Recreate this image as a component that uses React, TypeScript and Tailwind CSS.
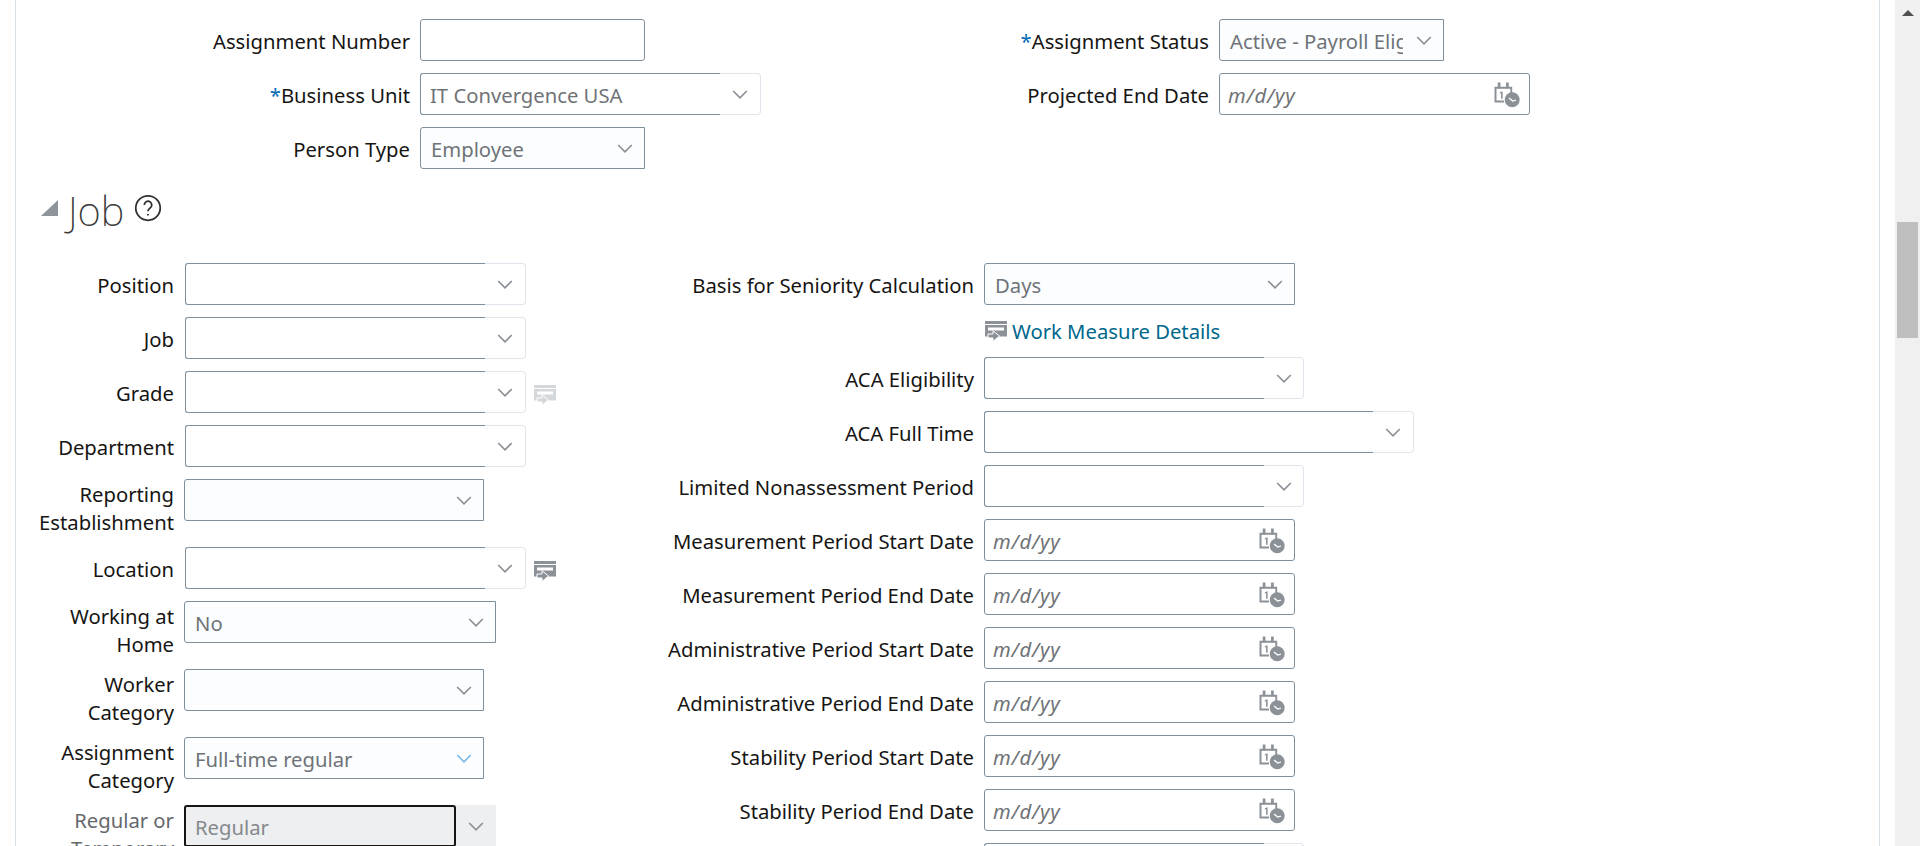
import type { ReactNode } from "react";

const labelFont = "font-['Noto_Sans','Open_Sans',sans-serif]";

function Chevron({ color = "#8b9197" }: { color?: string }) {
  return (
    <svg width="16" height="9" viewBox="0 0 16 9" fill="none" className="shrink-0">
      <path d="M1.2 1 8 7.8 14.8 1" stroke={color} strokeWidth="1.7" />
    </svg>
  );
}

function CalendarClock() {
  return (
    <svg width="26" height="26" viewBox="0 0 25 25" className="mt-[1px] shrink-0">
      <path d="M0.5 4.5h17v6h-1.8V6.4H2.4v11.4h7.2v1.9H0.5z" fill="#8b9197" />
      <path d="M3.6 0.5h2.6v5.5H3.6zM11.6 0.5h2.6v5.5h-2.6z" fill="#8b9197" />
      <path d="M7 9.2 5.6 10v1.2l1.2-.6V16h1.5V9.2z" fill="#8b9197" />
      <circle cx="17.5" cy="17" r="7.2" fill="#8b9197" />
      <path d="M14.5 15.3 18 18.3 21 17.5" stroke="#fff" strokeWidth="1.3" fill="none" />
    </svg>
  );
}

function DetailsIcon({ color = "#8b9197" }: { color?: string }) {
  return (
    <svg width="22" height="21" viewBox="0 0 22 21" className="shrink-0">
      <path d="M0 0h22v3H0z" fill={color} />
      <path d="M0 4h22v11.5H0z" fill={color} />
      <path d="M3 6.5h16v3H3z" fill="#fff" />
      <path
        d="M3 13h5v-3.2l6.5 5.2L8 20.5V17H3z"
        fill={color}
        stroke="#fff"
        strokeWidth="1"
      />
    </svg>
  );
}

function TextInput() {
  return <div className="h-[42px] w-[225px] rounded-[3px] border border-[#7f909d] bg-white" />;
}

function DateInput() {
  return (
    <div className="flex h-[42px] w-[311px] items-center justify-between rounded-[3px] border border-[#7f909d] bg-white pl-[8px] pr-[9px]">
      <span className="pt-[2px] italic tracking-[0.8px] text-[#6f7377]">m/d/yy</span>
      <CalendarClock />
    </div>
  );
}

function Select({
  value,
  width,
  chevron,
  gap = "ml-[6px]",
}: {
  value?: string;
  width: string;
  chevron?: string;
  gap?: string;
}) {
  return (
    <div className={`flex h-[42px] items-center justify-between rounded-l-[3px] border border-[#7f909d] bg-[#fbfdff] pl-[10px] pr-[11px] ${width}`}>
      <span className="min-w-0 flex-1 overflow-hidden whitespace-nowrap pt-[2px] text-[#6f7377]">{value}</span>
      <span className={gap}>
        <Chevron color={chevron} />
      </span>
    </div>
  );
}

function Combo({
  value,
  width,
  inner,
}: {
  value?: string;
  width: string;
  inner: string;
}) {
  return (
    <div className={`flex h-[42px] ${width}`}>
      <div className={`flex items-center rounded-l-[3px] border border-r-0 border-[#7f909d] bg-white pl-[9px] pt-[2px] text-[#6f7377] ${inner}`}>
        {value}
      </div>
      <div className="flex flex-1 items-center justify-center rounded-r-[4px] border border-l-0 border-[#dfe5ea] bg-white">
        <Chevron />
      </div>
    </div>
  );
}

function Row({
  label,
  labelWidth,
  required,
  tall,
  muted,
  children,
}: {
  label?: ReactNode;
  labelWidth: string;
  required?: boolean;
  tall?: boolean;
  muted?: boolean;
  children: ReactNode;
}) {
  return (
    <div className={`mb-[12px] flex items-start ${tall ? "h-[56px]" : "h-[42px]"}`}>
      <div
        className={`mr-[10px] shrink-0 text-right leading-[28px] ${labelWidth} ${tall ? "mt-[1px]" : "pt-[8px]"} ${muted ? "text-[#65686b]" : "text-[#161513]"}`}
      >
        {required && <span className="text-[#0b6fb8]">*</span>}
        {label}
      </div>
      {children}
    </div>
  );
}

export default function App() {
  const topLeft = "w-[394px]";
  const topRight = "w-[313px]";
  const jobLeft = "w-[158px]";
  const jobRight = "w-[308px]";

  return (
    <div className={`flex h-[846px] overflow-hidden bg-white text-[20.25px] ${labelFont}`}>
      <main className="ml-[15px] w-[1865px] shrink-0 border-x border-[#d9e0e6]">
        {/* Assignment details */}
        <section className="flex pt-[19px]">
          <div className="w-[880px]">
            <Row label="Assignment Number" labelWidth={topLeft}>
              <TextInput />
            </Row>
            <Row label="Business Unit" labelWidth={topLeft} required>
              <Combo value="IT Convergence USA" width="w-[341px]" inner="w-[300px]" />
            </Row>
            <Row label="Person Type" labelWidth={topLeft}>
              <Select value="Employee" width="w-[225px]" />
            </Row>
          </div>
          <div>
            <Row label="Assignment Status" labelWidth={topRight} required>
              <Select value="Active - Payroll Eligible" width="w-[225px]" gap="ml-[13px]" />
            </Row>
            <Row label="Projected End Date" labelWidth={topRight}>
              <DateInput />
            </Row>
          </div>
        </section>

        {/* Job header */}
        <div className="flex h-[82px] items-start pl-[25px]">
          <div className="mt-[19px] h-0 w-0 border-b-[16px] border-l-[17px] border-b-[#8e9499] border-l-transparent" />
          <h2 className="ml-[10px] mt-[2px] text-[40px] font-extralight leading-[56px] text-[#3a3a3a]">Job</h2>
          <svg width="28" height="28" viewBox="0 0 24 24" fill="none" stroke="#2f2f2f" strokeWidth="1.5" className="ml-[10px] mt-[13px]">
            <circle cx="12" cy="12" r="10.5" />
            <path d="M8.8 9.4a3.2 3.2 0 1 1 4.8 2.8c-1 .6-1.6 1.2-1.6 2.6" />
            <path d="M12 17.2v1.2" />
          </svg>
        </div>

        {/* Job fields */}
        <section className="flex">
          <div className="w-[650px]">
            <Row label="Position" labelWidth={jobLeft}>
              <Combo width="w-[341px] ml-[1px]" inner="w-[300px]" />
            </Row>
            <Row label="Job" labelWidth={jobLeft}>
              <Combo width="w-[341px] ml-[1px]" inner="w-[300px]" />
            </Row>
            <Row label="Grade" labelWidth={jobLeft}>
              <Combo width="w-[341px] ml-[1px]" inner="w-[300px]" />
              <span className="ml-[8px] mt-[14px]">
                <DetailsIcon color="#d5d8db" />
              </span>
            </Row>
            <Row label="Department" labelWidth={jobLeft}>
              <Combo width="w-[341px] ml-[1px]" inner="w-[300px]" />
            </Row>
            <Row label={<>Reporting<br />Establishment</>} labelWidth={jobLeft} tall>
              <Select width="w-[300px]" />
            </Row>
            <Row label="Location" labelWidth={jobLeft}>
              <Combo width="w-[341px] ml-[1px]" inner="w-[300px]" />
              <span className="ml-[8px] mt-[14px]">
                <DetailsIcon />
              </span>
            </Row>
            <Row label={<>Working at<br />Home</>} labelWidth={jobLeft} tall>
              <Select value="No" width="w-[312px]" />
            </Row>
            <Row label={<>Worker<br />Category</>} labelWidth={jobLeft} tall>
              <Select width="w-[300px]" />
            </Row>
            <Row label={<>Assignment<br />Category</>} labelWidth={jobLeft} tall>
              <Select value="Full-time regular" width="w-[300px]" chevron="#7ab8ea" />
            </Row>
            <Row label={<>Regular or<br />Temporary</>} labelWidth={jobLeft} tall muted>
              <div className="flex h-[42px] w-[312px] bg-[#eeeff0]">
                <div className="flex w-[272px] items-center rounded-[3px] border-2 border-[#161513] pl-[9px] pt-[2px] text-[#85898d]">
                  Regular
                </div>
                <div className="flex flex-1 items-center justify-center">
                  <Chevron />
                </div>
              </div>
            </Row>
          </div>

          <div>
            <Row label="Basis for Seniority Calculation" labelWidth={jobRight}>
              <Select value="Days" width="w-[311px]" />
            </Row>
            <div className="mb-[12px] flex h-[28px] items-center pl-[319px]">
              <DetailsIcon />
              <a className="ml-[5px] text-[#00688c]">Work Measure Details</a>
            </div>
            <Row label="ACA Eligibility" labelWidth={jobRight}>
              <Combo width="w-[320px]" inner="w-[280px]" />
            </Row>
            <Row label="ACA Full Time" labelWidth={jobRight}>
              <Combo width="w-[430px]" inner="w-[389px]" />
            </Row>
            <Row label="Limited Nonassessment Period" labelWidth={jobRight}>
              <Combo width="w-[320px]" inner="w-[280px]" />
            </Row>
            <Row label="Measurement Period Start Date" labelWidth={jobRight}>
              <DateInput />
            </Row>
            <Row label="Measurement Period End Date" labelWidth={jobRight}>
              <DateInput />
            </Row>
            <Row label="Administrative Period Start Date" labelWidth={jobRight}>
              <DateInput />
            </Row>
            <Row label="Administrative Period End Date" labelWidth={jobRight}>
              <DateInput />
            </Row>
            <Row label="Stability Period Start Date" labelWidth={jobRight}>
              <DateInput />
            </Row>
            <Row label="Stability Period End Date" labelWidth={jobRight}>
              <DateInput />
            </Row>
            <Row labelWidth={jobRight}>
              <Combo width="w-[320px]" inner="w-[280px]" />
            </Row>
          </div>
        </section>
      </main>

      {/* Window scrollbar */}
      <div className="ml-[15px] flex w-[25px] shrink-0 flex-col items-center bg-[#f0f0f0] pt-[10px]">
        <div className="h-0 w-0 border-x-[6px] border-b-[6px] border-x-transparent border-b-[#505050]" />
        <div className="mt-[206px] h-[116px] w-[21px] bg-[#bfbfbf]" />
      </div>
    </div>
  );
}
